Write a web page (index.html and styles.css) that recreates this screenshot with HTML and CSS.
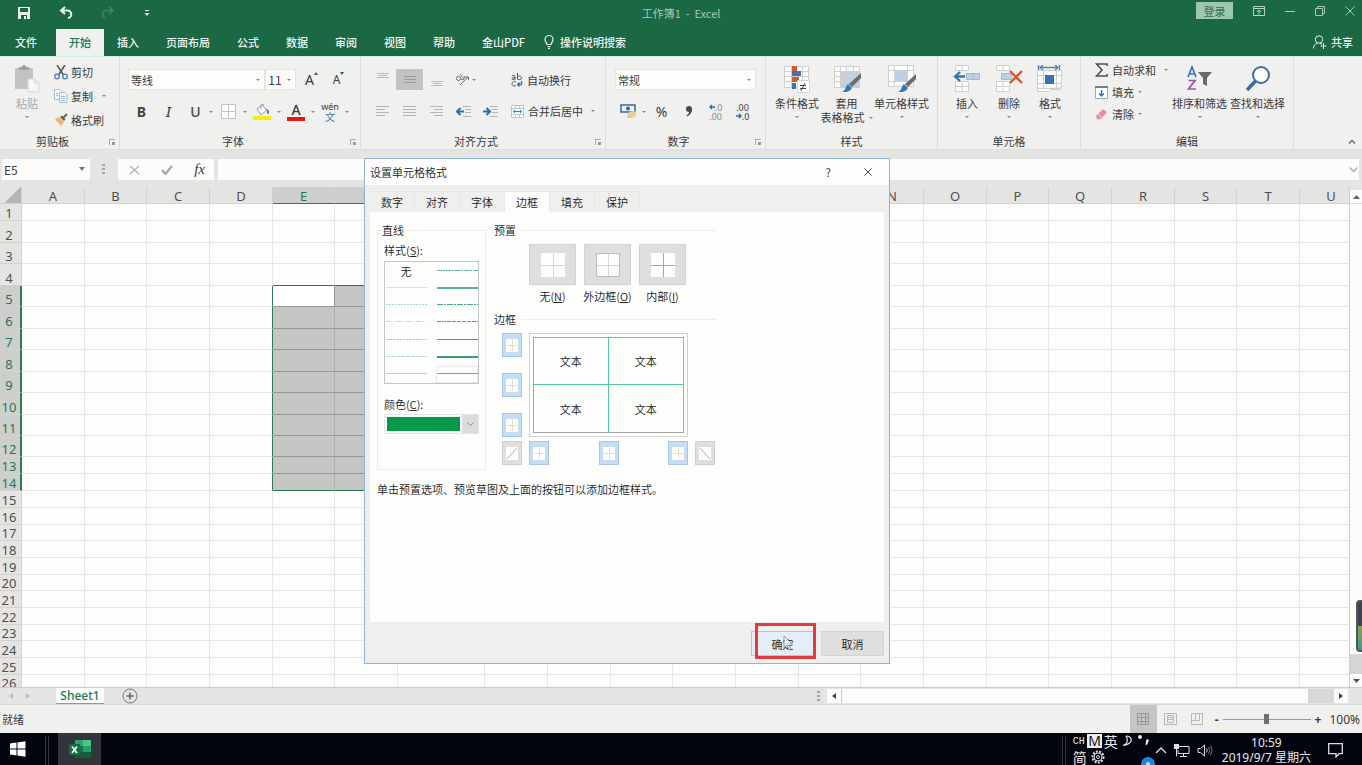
FILE: index.html
```html
<!DOCTYPE html>
<html lang="zh-CN">
<head>
<meta charset="utf-8">
<title>工作簿1 - Excel</title>
<link rel="stylesheet" href="styles.css">
</head>
<body>
<div class="app">
  <header class="titlebar">
    <div class="quick">
      <button class="plain" aria-label="保存"><svg width="14" height="14" viewBox="0 0 14 14"><path d="M1 1h12v12H1z" fill="#eef6f1"/><path d="M3 2h8v4H3zM4 9h6v4H4z" fill="#1a6844"/><path d="M7 10h2v3H7z" fill="#eef6f1"/></svg></button>
      <button class="plain" aria-label="撤消"><svg width="14" height="14" viewBox="0 0 14 14"><path d="M2 4.500h6a3.500 3.500 0 0 1 1 7.500M6 1L2 4.500 6 8" fill="none" stroke="#eef6f1" stroke-width="2"/></svg></button>
      <button class="plain" aria-label="恢复"><svg width="14" height="14" viewBox="0 0 14 14"><path d="M12 4.500H6a3.500 3.500 0 0 0-1 7.500M8 1l4 3.500L8 8" fill="none" stroke="#3f8763" stroke-width="1.500"/></svg></button>
      <button class="plain" aria-label="自定义快速访问工具栏"><svg width="8" height="8" viewBox="0 0 8 8"><path d="M2 1h4v1H2zM1.500 4h5L4 7z" fill="#d8e8df"/></svg></button>
    </div>
    <div class="doc-title">工作簿1&nbsp; -&nbsp; Excel</div>
    <div class="window-tools">
      <button class="login">登录</button>
      <button class="plain" aria-label="功能区显示选项"><svg width="12" height="10" viewBox="0 0 12 10"><path d="M.5.500h11v9H.5zM.5 2.500h11M6 8.500v-4M4 6l2-2 2 2" fill="none" stroke="#b5d3c2"/></svg></button>
      <button class="plain" aria-label="最小化"><svg width="10" height="10" viewBox="0 0 10 10"><path d="M0 5.500h10" stroke="#a5c8b5"/></svg></button>
      <button class="plain" aria-label="还原"><svg width="10" height="10" viewBox="0 0 10 10"><path d="M.5 2.500h7v7h-7zM2.500 2V.5h7v7H8" fill="none" stroke="#a5c8b5"/></svg></button>
      <button class="plain" aria-label="关闭"><svg width="10" height="10" viewBox="0 0 10 10"><path d="M.5.500l9 9M9.500.500l-9 9" stroke="#a5c8b5"/></svg></button>
    </div>
  </header>
  <nav class="tabs">
    <button class="tab file">文件</button>
    <button class="tab current">开始</button>
    <button class="tab">插入</button>
    <button class="tab">页面布局</button>
    <button class="tab">公式</button>
    <button class="tab">数据</button>
    <button class="tab">审阅</button>
    <button class="tab">视图</button>
    <button class="tab">帮助</button>
    <button class="tab">金山PDF</button>
    <button class="tell"><svg width="10" height="14" viewBox="0 0 10 14"><path d="M3 9.500C3 8 1 7 1 4.500a4 4 0 0 1 8 0C9 7 7 8 7 9.500zM3.500 11.500h3M4 13.300h2" fill="none" stroke="#e8f3ed" stroke-width="1.200"/></svg>操作说明搜索</button>
    <button class="share"><svg width="14" height="14" viewBox="0 0 14 14"><circle cx="6" cy="4.500" r="3.700" fill="none" stroke="#e8f3ed"/><path d="M.5 13.500c0-3 1.500-4.500 4-5.200M7 8.300l2 1M7.500 11h6M10.500 8v6" fill="none" stroke="#e8f3ed"/></svg>共享</button>
  </nav>

  <section class="ribbon">
    <div class="group g-clip">
      <div class="body clip-body">
        <button class="big paste"><svg width="26" height="28" viewBox="0 0 26 28"><path d="M1 3h18v21H1z" fill="#c4c3c4"/><path d="M5 5V2h3a2 2 0 0 1 4 0h3v3z" fill="#9f9fa0"/><path d="M14 14h7l4 4v9H14z" fill="#f6f6f8" stroke="#d7d7d9"/><path d="M21 14v4h4" fill="none" stroke="#d0d0d2"/></svg><span>粘贴</span><i class="caret"></i></button>
        <div class="stack s24">
          <button><svg width="14" height="15" viewBox="0 0 14 15"><path d="M3 0l6.500 10M11 0L4.500 10" stroke="#555" stroke-width="1.500"/><circle cx="3" cy="11.500" r="2.300" fill="none" stroke="#4b7db5" stroke-width="1.300"/><circle cx="11" cy="11.500" r="2.300" fill="none" stroke="#4b7db5" stroke-width="1.300"/></svg>剪切</button>
          <button><svg width="14" height="14" viewBox="0 0 14 14"><path d="M.5.500H6l2 2v8H.5z" fill="#f4f7fa" stroke="#a9bccd"/><path d="M5.500 3.500H11l2 2v8H5.500z" fill="#f4f7fa" stroke="#a9bccd"/><path d="M7 7.500h4M7 9.500h4M7 11.500h4M2 4.500h2M2 6.500h2" stroke="#9db9d3"/></svg>复制<i class="caret"></i></button>
          <button><svg width="14" height="14" viewBox="0 0 14 14"><path d="M1 6l4-2 5 5-3 4z" fill="#e9b869"/><path d="M6 4l4 4 1.500-2L8.500 2.500z" fill="#6a5a4c"/><path d="M10 4l3-3" stroke="#6a6462" stroke-width="2"/></svg>格式刷</button>
        </div>
      </div>
      <div class="caption has-launch">剪贴板<i class="launch"></i></div>
    </div>

    <div class="group g-font">
      <div class="body rows">
        <div class="line">
          <label class="pick font-name"><select aria-label="字体"><option>等线</option></select><i class="caret"></i></label>
          <label class="pick font-size"><select aria-label="字号"><option>11</option></select><i class="caret"></i></label>
          <button class="slot grow">A<svg width="4" height="3" viewBox="0 0 4 3"><path d="M0 3l2-3 2 3z" fill="#35577d"/></svg></button>
          <button class="slot shrink">A<svg width="4" height="3" viewBox="0 0 4 3"><path d="M0 0h4L2 3z" fill="#35577d"/></svg></button>
        </div>
        <div class="line font-line">
          <button class="slot letter bold">B</button>
          <button class="slot letter italic">I</button>
          <button class="slot letter under">U</button><i class="caret"></i>
          <button class="wide"><svg width="15" height="15" viewBox="0 0 15 15"><path d="M.5.500h14v14H.5zM7.500 1v13M1 7.500h13" fill="#fff" stroke="#c1c1c1"/></svg></button><i class="caret"></i>
          <button class="wide"><svg width="18" height="18" viewBox="0 0 18 18"><path d="M4 6l5-4 5 5-6 5z" fill="#f7f9fb" stroke="#8aa0b8"/><path d="M8 6V2a2 2 0 0 1 3 0" fill="none" stroke="#8aa0b8"/><path d="M14 6c3 2 2 5 1 5s-1-2-1-5" fill="#3974b8"/><path d="M0 13h18v4H0z" fill="#fbea12"/></svg></button><i class="caret"></i>
          <button class="wide color-a"><span>A</span></button><i class="caret"></i>
          <button class="wide phonetic"><span>wén</span><b>文</b></button><i class="caret"></i>
        </div>
      </div>
      <div class="caption has-launch">字体<i class="launch"></i></div>
    </div>

    <div class="group g-align">
      <div class="body rows align-rows">
        <button class="slot up" aria-label="顶端对齐"><svg width="12" height="6" viewBox="0 0 12 6"><path d="M0 .500h12M2 2.500h8M0 4.500h12" stroke="#b9b9b9"/></svg></button>
        <button class="slot on" aria-label="垂直居中"><svg width="12" height="8" viewBox="0 0 12 8"><path d="M0 .500h12M0 3.500h12M0 6.500h12" stroke="#9c9c9c"/></svg></button>
        <button class="slot down" aria-label="底端对齐"><svg width="12" height="6" viewBox="0 0 12 6"><path d="M0 .500h12M2 2.500h8M0 4.500h12" stroke="#b9b9b9"/></svg></button>
        <button class="slot" aria-label="方向"><svg width="14" height="13" viewBox="0 0 14 13"><path d="M1 4a2 2 0 1 1 3 3 2 2 0 1 1-3-3M4 1l4 5M8 3a2 2 0 1 1-3 3M4 12l8-8M9 4h3.500v3" fill="none" stroke="#6e6e6e"/></svg><i class="caret"></i></button>
        <span></span>
        <button class="act"><svg width="12" height="14" viewBox="0 0 12 14"><path d="M1 3c2-1.500 3 0 3 1v2.500M4 4.500c-4 0-4 2.500-1 2L4 5M6.500 0v6.500M6.500 4c1-2 4-1 4 1s-3 2-4 .5M5 9c-2-1.500-4 0-4 1.700S3 14 5 12.500" fill="none" stroke="#555"/><path d="M10.500 8v3.500H6.500M8.500 9.500l-2 2 2 2" fill="none" stroke="#3a73b3" stroke-width="1.300"/></svg>自动换行</button>
        <button class="slot" aria-label="左对齐"><svg width="13" height="12" viewBox="0 0 13 12"><path d="M0 .500h13M0 3.500h9M0 6.500h13M0 9.500h9" stroke="#b5b5b5"/></svg></button>
        <button class="slot" aria-label="居中"><svg width="13" height="12" viewBox="0 0 13 12"><path d="M0 .500h13M0 3.500h13M0 6.500h13M0 9.500h13" stroke="#b5b5b5"/></svg></button>
        <button class="slot" aria-label="右对齐"><svg width="13" height="12" viewBox="0 0 13 12"><path d="M0 .500h13M4 3.500h9M0 6.500h13M4 9.500h9" stroke="#b5b5b5"/></svg></button>
        <button class="slot" aria-label="减少缩进"><svg width="15" height="12" viewBox="0 0 15 12"><path d="M7 .500h8M9 3.500h6M9 6.500h6M7 10.500h8" stroke="#b5b5b5"/><path d="M8 5.500H1.500M4.500 2L1 5.500 4.500 9" fill="none" stroke="#2f6cb3" stroke-width="2"/></svg></button>
        <button class="slot" aria-label="增加缩进"><svg width="15" height="12" viewBox="0 0 15 12"><path d="M7 .500h8M9 3.500h6M9 6.500h6M7 10.500h8" stroke="#b5b5b5"/><path d="M0 5.500h6.500M3.500 2L7 5.500 3.500 9" fill="none" stroke="#2f6cb3" stroke-width="2"/></svg></button>
        <button class="act"><svg width="13" height="13" viewBox="0 0 13 13"><path d="M.5.500h12v12H.5zM.5 3.500h12M.5 9.500h12M4.500.500v3M8.500.500v3M4.500 9.500v3M8.500 9.500v3" fill="#fbfdff" stroke="#b5c6d6"/><path d="M2.500 6.500h8M4 5L2.500 6.500 4 8M9 5l1.500 1.500L9 8" fill="none" stroke="#4d7fb8"/></svg>合并后居中<i class="caret"></i></button>
      </div>
      <div class="caption has-launch">对齐方式<i class="launch"></i></div>
    </div>

    <div class="group g-num">
      <div class="body rows">
        <label class="pick format"><select aria-label="数字格式"><option>常规</option></select><i class="caret"></i></label>
        <div class="line num-line">
          <button class="slot" aria-label="会计数字格式"><svg width="17" height="15" viewBox="0 0 17 15"><path d="M1 1h14v7H1z" fill="#eaf1f8" stroke="#35679f" stroke-width="1.500"/><circle cx="8" cy="4.500" r="2" fill="#35679f"/><path d="M8 9c2-2 6-3 8-1v4l-4 2H7z" fill="#ecc98c"/></svg></button><i class="caret"></i>
          <button class="slot pct">%</button>
          <button class="slot" aria-label="千位分隔样式"><svg width="8" height="11" viewBox="0 0 8 11"><circle cx="4" cy="3" r="3" fill="#4a4a4a"/><path d="M7 3c0 4-2 6-5 7.500L1.500 9.500C4 8 4.500 6 4 4z" fill="#4a4a4a"/></svg></button>
          <button class="slot dec"><span><svg width="6" height="6" viewBox="0 0 6 6"><path d="M6 3H1M3 1L1 3l2 2" fill="none" stroke="#2f6cb3" stroke-width="1.500"/></svg>.0</span><span>.00</span></button>
          <button class="slot dec dark"><span>.00</span><span><svg width="6" height="6" viewBox="0 0 6 6"><path d="M0 3h5M3 1l2 2-2 2" fill="none" stroke="#2f6cb3" stroke-width="1.500"/></svg>.0</span></button>
        </div>
      </div>
      <div class="caption has-launch">数字<i class="launch"></i></div>
    </div>

    <div class="group g-style">
      <div class="body bigs">
        <button class="big"><svg width="28" height="28" viewBox="0 0 28 28"><path d="M1.500 1.500h24v21h-24zM1.500 6.500h24M1.500 11.500h24M1.500 16.500h24M8.500 1.500v21M19.500 1.500v21" fill="#fdfdfd" stroke="#cfcfcf"/><path d="M9 1h5v5H9zM9 12h7v5H9z" fill="#d9572f"/><path d="M9 6h9v5H9zM9 18h4v6H9z" fill="#3d74b4"/><path d="M14.500 15.500h12v12h-12z" fill="#fff" stroke="#d5d5d5"/><path d="M17 20.500h6M17 23.500h6M22 18l-4 8" stroke="#444"/></svg><span>条件格式</span><i class="caret"></i></button>
        <button class="big"><svg width="28" height="28" viewBox="0 0 28 28"><path d="M1.500 1.500h25v21h-25z" fill="#fdfdfd" stroke="#cfcfcf"/><path d="M8 7h19v16H8z" fill="#bdd0e6"/><path d="M1.500 6.500h25M1.500 11.500h25M1.500 16.500h25M7.500 1.500v21M13.500 1.500v21M20.500 1.500v21" fill="none" stroke="#cfcfcf"/><path d="M28 8v5l-9 9-3-3z" fill="#6c6c6c"/><path d="M15 19l4 4c-3 5-8 4-10 4 4-2 3-5 6-8" fill="#3976b8"/></svg><span>套用<br>表格格式<i class="caret"></i></span></button>
        <button class="big"><svg width="28" height="28" viewBox="0 0 28 28"><path d="M.5.500h25v21H.5zM.5 5.500h25M.5 16.500h25M6.500.500v21M19.500.500v21" fill="#fdfdfd" stroke="#cfcfcf"/><path d="M7 6h12v10H7z" fill="#bdd0e6"/><path d="M28 9v5l-8 8-3-3z" fill="#6c6c6c"/><path d="M16 19l4 4c-3 5-8 4-10 4 4-2 3-5 6-8" fill="#3976b8"/></svg><span>单元格样式</span><i class="caret"></i></button>
      </div>
      <div class="caption">样式</div>
    </div>

    <div class="group g-cell">
      <div class="body bigs">
        <button class="big"><svg width="28" height="28" viewBox="0 0 28 28"><path d="M2.500.500h13v5h-13zM9 .500v5M2.500 16.500h13v10h-13zM9 16.500v10M2.500 21.500h13" fill="#fdfdfd" stroke="#cfcfcf"/><path d="M13.500 8.500h13v6h-13zM20 8.500v6" fill="#bccfe3" stroke="#a9bac9"/><path d="M12 11.500H3M7 7l-5 4.500L7 16" fill="none" stroke="#3473b5" stroke-width="2.300"/></svg><span>插入</span><i class="caret"></i></button>
        <button class="big"><svg width="28" height="28" viewBox="0 0 28 28"><path d="M1.500.500h13v5h-13zM8 .500v5M1.500 16.500h13v10h-13zM8 16.500v10M1.500 21.500h13" fill="#fdfdfd" stroke="#cfcfcf"/><path d="M6.500 8.500h10v6h-10z" fill="#bccfe3" stroke="#a9bac9"/><path d="M15 6l12 12M27 6L15 18" stroke="#d9552f" stroke-width="2.300"/></svg><span>删除</span><i class="caret"></i></button>
        <button class="big"><svg width="26" height="28" viewBox="0 0 26 28"><path d="M.5 5.500h24v18H.5zM6.500 5.500v18M19.500 5.500v18M.5 10.500h24M.5 18.500h24M.5 23.500v3h11l2-2h9l2-3" fill="#fdfdfd" stroke="#cfcfcf"/><path d="M8 10h9v9H8z" fill="#3473b5"/><path d="M3 2.500h18M6 0L3 2.500 6 5M18 0l3 2.500L18 5M1.500 0v5M22.500 0v5" fill="none" stroke="#4d82bd" stroke-width="1.300"/></svg><span>格式</span><i class="caret"></i></button>
      </div>
      <div class="caption">单元格</div>
    </div>

    <div class="group g-edit">
      <div class="body edit-body">
        <div class="stack s22">
          <button><svg width="13" height="14" viewBox="0 0 13 14"><path d="M12 3V1H1.500l5.500 6-5.500 6H12v-2" fill="none" stroke="#505050" stroke-width="1.600"/></svg>自动求和<i class="caret"></i></button>
          <button><svg width="13" height="13" viewBox="0 0 13 13"><path d="M.5.500h12v12H.5z" fill="#fff" stroke="#9bacbb"/><path d="M0 0h13v2H0z" fill="#707f8c"/><path d="M6.500 4v6M4 7.500L6.500 10 9 7.500" fill="none" stroke="#3473b5" stroke-width="1.500"/></svg>填充<i class="caret"></i></button>
          <button><svg width="13" height="12" viewBox="0 0 13 12"><path d="M1 8l7-7 4 3-6 7-4 .5z" fill="#e88d99"/><path d="M3 6l4 4" stroke="#f7d9dd"/></svg>清除<i class="caret"></i></button>
        </div>
        <button class="big"><svg width="28" height="28" viewBox="0 0 28 28"><path d="M2 12L6 2l4 10M3.500 9h5" fill="none" stroke="#3a76b9" stroke-width="1.700"/><path d="M2.500 15.500H9L2.500 24H10" fill="none" stroke="#9a57ad" stroke-width="1.700"/><path d="M12 7h14l-5 6v8l-4-2v-6z" fill="#6b6b6b"/></svg><span>排序和筛选</span><i class="caret"></i></button>
        <button class="big"><svg width="28" height="28" viewBox="0 0 28 28"><circle cx="17" cy="10" r="8" fill="#fbfdff" stroke="#3b6d9f" stroke-width="2"/><path d="M11.500 16L3 25" stroke="#3b6d9f" stroke-width="3.500"/></svg><span>查找和选择</span><i class="caret"></i></button>
      </div>
      <div class="caption">编辑</div>
    </div>
    <button class="plain collapse" aria-label="折叠功能区"><svg width="8" height="6" viewBox="0 0 8 6"><path d="M1 4.500l3-3 3 3" fill="none" stroke="#666" stroke-width="1.300"/></svg></button>
  </section>

  <section class="formula">
    <div class="namebox"><input value="E5" aria-label="名称框"><svg width="7" height="5" viewBox="0 0 7 5"><path d="M0 0h6L3 4z" fill="#777"/></svg></div>
    <div class="grip"></div>
    <div class="fx-tools">
      <button class="plain" aria-label="取消输入"><svg width="11" height="10" viewBox="0 0 11 10"><path d="M1 1l9 8M10 1L1 9" stroke="#b3b3b3" stroke-width="1.300"/></svg></button>
      <button class="plain" aria-label="输入"><svg width="12" height="10" viewBox="0 0 12 10"><path d="M1 5l3.500 4L11 1" fill="none" stroke="#a2a2a2" stroke-width="2"/></svg></button>
      <button class="plain fx">fx</button>
    </div>
    <div class="fx-input"><input aria-label="编辑栏"><svg width="9" height="6" viewBox="0 0 9 6"><path d="M.5.500l4 4 4-4" fill="none" stroke="#aaa" stroke-width="1.300"/></svg></div>
  </section>

  <main class="sheet">
    <div class="cells"><table class="grid" id="grid"></table></div>
    <div class="vscroll">
      <button aria-label="向上滚动"><svg width="7" height="4" viewBox="0 0 7 4"><path d="M0 4h7L3.500 0z" fill="#666"/></svg></button>
      <div class="vtrack"></div>
      <div class="vthumb"></div>
      <button aria-label="向下滚动"><svg width="7" height="4" viewBox="0 0 7 4"><path d="M0 0h7L3.500 4z" fill="#555"/></svg></button>
    </div>
  </main>

  <div class="sheetbar">
    <div class="nav-arrows"><svg width="5" height="6" viewBox="0 0 5 6"><path d="M4 0v6L0 3z" fill="#bdbdbd"/></svg><svg width="5" height="6" viewBox="0 0 5 6"><path d="M0 0v6l4-3z" fill="#bdbdbd"/></svg></div>
    <button class="sheet-tab">Sheet1</button>
    <button class="plain" aria-label="新工作表"><svg width="16" height="16" viewBox="0 0 16 16"><circle cx="8" cy="8" r="7" fill="none" stroke="#777"/><path d="M4.500 8h7M8 4.500v7" stroke="#666" stroke-width="1.500"/></svg></button>
    <div class="hscroll">
      <div class="grip"></div>
      <button aria-label="向左滚动"><svg width="4" height="6" viewBox="0 0 4 6"><path d="M4 0v6L0 3z" fill="#444"/></svg></button>
      <div class="htrack"></div>
      <div class="hthumb"></div>
      <button aria-label="向右滚动"><svg width="4" height="6" viewBox="0 0 4 6"><path d="M0 0v6l4-3z" fill="#444"/></svg></button>
    </div>
  </div>

  <footer class="status">
    <span class="ready">就绪</span>
    <div class="views">
      <button class="on" aria-label="普通"><svg width="12" height="12" viewBox="0 0 12 12"><path d="M.5.500h11v11H.5zM4.500 0v12M8.500 0v12M0 4.500h12M0 8.500h12" fill="none" stroke="#999"/></svg></button>
      <button aria-label="页面布局"><svg width="13" height="12" viewBox="0 0 13 12"><path d="M.5.500h12v11H.5zM3.500 2.500h6v7h-6zM4 4.500h5M4 6.500h5" fill="none" stroke="#b8b8b8"/></svg></button>
      <button aria-label="分页预览"><svg width="12" height="12" viewBox="0 0 12 12"><path d="M.5.500h11v11H.5zM4.500.500v7M8.500.500v7M.5 7.500h8" fill="none" stroke="#b8b8b8"/></svg></button>
    </div>
    <div class="zoom"><b>-</b><input type="range" min="10" max="190" value="100" aria-label="缩放"><b>+</b><span>100%</span></div>
  </footer>

  <footer class="taskbar">
    <button class="start" aria-label="开始菜单"><svg width="16" height="16" viewBox="0 0 16 16"><path d="M0 2.500L6.500 1.500V7.500H0zM7.500 1.400L15.500.2V7.500h-8zM0 8.500h6.500v6L0 13.500zM7.500 8.500h8v7.200l-8-1.100z" fill="#fff"/></svg></button>
    <div class="bars"></div>
    <button class="excel" aria-label="Excel"><svg width="22" height="20" viewBox="0 0 22 20"><path d="M6 1h8v6H6z" fill="#2fa36a"/><path d="M14 1h8v6h-8z" fill="#47c78b"/><path d="M6 7h8v6H6z" fill="#137443"/><path d="M14 7h8v6h-8z" fill="#26a265"/><path d="M6 13h16v6H6z" fill="#165c38"/><path d="M0 5h11v11H0z" fill="#117040"/><path d="M3 7.500l5 6.500M8 7.500L3 14" stroke="#fff" stroke-width="1.700"/></svg></button>
    <div class="tray">
      <div class="bars"></div>
      <div class="ime">
        <div><small>CH</small><b>M</b><span>英</span><svg width="12" height="12" viewBox="0 0 12 12"><path d="M4 1c7 0 8 8-3 9.500 4-1.500 6-5 3-9.500" fill="none" stroke="#e8e8ea" stroke-width="1.200"/></svg><svg width="12" height="12" viewBox="0 0 12 12"><circle cx="2" cy="2" r="2" fill="#eee"/><path d="M8.500 4l2.500 1-2 5-1.500-.5z" fill="#eee"/></svg></div>
        <div><span>简</span><svg width="14" height="14" viewBox="0 0 14 14"><circle cx="7" cy="7" r="5.500" fill="none" stroke="#ddd" stroke-width="2" stroke-dasharray="2 1.300"/><circle cx="7" cy="7" r="4" fill="none" stroke="#ddd"/><circle cx="7" cy="7" r="1.500" fill="none" stroke="#ddd"/></svg><svg class="dot" width="14" height="8" viewBox="0 0 14 8"><circle cx="7" cy="7" r="7" fill="#1b86dc"/><circle cx="7" cy="7" r="2" fill="#bcdcf5"/></svg></div>
      </div>
      <div class="tray-icons">
        <svg width="12" height="7" viewBox="0 0 12 7"><path d="M1 6l5-5 5 5" fill="none" stroke="#ddd" stroke-width="1.300"/></svg>
        <svg width="16" height="13" viewBox="0 0 16 13"><path d="M5 2.500h10v7H4V6M9.500 9.500v3M6 12.500h7M2.500 5v7.500" fill="none" stroke="#ddd"/><path d="M0 0h5v5H0z" fill="#ddd"/></svg>
        <svg width="16" height="13" viewBox="0 0 16 13"><path d="M1 4.500h2.500l4-3.500v11l-4-3.500H1z" fill="none" stroke="#ddd"/><path d="M9.500 4.500q1.500 2 0 4" fill="none" stroke="#ddd"/><path d="M11.500 3q2.500 3.500 0 7M13.500 1.500q3 5 0 10" fill="none" stroke="#777"/></svg>
      </div>
      <div class="clock"><span>10:59</span><span>2019/9/7 星期六</span></div>
      <svg class="note" width="15" height="15" viewBox="0 0 15 15"><path d="M.7.700h13.600v10H11L8 14v-3.300H.7z" fill="none" stroke="#ddd" stroke-width="1.300"/></svg>
    </div>
  </footer>
</div>

<div class="side-widget"></div>

<div class="dialog" role="dialog" aria-label="设置单元格格式">
  <div class="dlg-title"><span>设置单元格格式</span><button class="plain">?</button><button class="plain" aria-label="关闭"><svg width="8" height="8" viewBox="0 0 8 8"><path d="M.5.500l7 7M7.500.500l-7 7" stroke="#444"/></svg></button></div>
  <div class="dlg-main">
    <div class="dlg-tabs">
      <button>数字</button><button>对齐</button><button>字体</button><button class="current">边框</button><button>填充</button><button>保护</button>
    </div>
    <div class="dlg-page">
      <div class="cols">
        <fieldset class="lines">
          <legend>直线</legend>
          <span class="lbl">样式(<u>S</u>):</span>
          <div class="styles" id="styles"></div>
          <label class="lbl color-lbl" for="color">颜色(<u>C</u>):</label>
          <div class="color"><select id="color"><option></option></select><i class="swatch"></i><i class="drop"><svg width="7" height="5" viewBox="0 0 7 5"><path d="M.5.500l3 3 3-3" fill="none" stroke="#888"/></svg></i></div>
        </fieldset>
        <div class="right">
          <div class="sec"><span>预置</span><i></i></div>
          <div class="presets">
            <button><i><svg width="24" height="24" viewBox="0 0 24 24"><path d="M0 0h24v24H0z" fill="#fdfdfd"/><path d="M12.500 0v24M0 12.500h24" stroke="#d5d5d5"/></svg></i><span>无(<u>N</u>)</span></button>
            <button><i><svg width="24" height="24" viewBox="0 0 24 24"><path d="M.5.500h23v23H.5z" fill="#fdfdfd" stroke="#bcbcbc"/><path d="M12.500 1v22M1 12.500h22" stroke="#d5d5d5"/></svg></i><span>外边框(<u>O</u>)</span></button>
            <button><i><svg width="24" height="24" viewBox="0 0 24 24"><path d="M0 0h24v24H0z" fill="#fdfdfd"/><path d="M12.500 0v24M0 12.500h24" stroke="#a8a8a8"/></svg></i><span>内部(<u>I</u>)</span></button>
          </div>
          <div class="sec sec2"><span>边框</span><i></i></div>
          <div class="edges">
            <div class="vbtns" id="vbtns"></div>
            <div class="preview"><div class="pcell">文本</div><div class="pcell">文本</div><div class="pcell">文本</div><div class="pcell">文本</div></div>
            <span></span>
            <button class="edge off" aria-label="斜线"><svg width="12" height="13" viewBox="0 0 12 13"><path d="M0 0h12v13H0z" fill="#fff"/><path d="M1 12L11 1" stroke="#aaa"/></svg></button>
            <div class="hbtns" id="hbtns"></div>
            <button class="edge off" aria-label="反斜线"><svg width="12" height="13" viewBox="0 0 12 13"><path d="M0 0h12v13H0z" fill="#fff"/><path d="M1 1l10 11" stroke="#aaa"/></svg></button>
          </div>
        </div>
      </div>
      <p class="hint">单击预置选项、预览草图及上面的按钮可以添加边框样式。</p>
    </div>
    <div class="dlg-foot">
      <button class="ok">确定</button><button>取消</button>
      <div class="mark"></div>
      <svg class="pointer" width="12" height="17" viewBox="0 0 12 17"><path d="M1 1v12l3-3 2 5 2-1-2-4h4z" fill="#fff" stroke="#888"/></svg>
    </div>
  </div>
</div>
<script src="app.js"></script>
</body>
</html>
```

FILE: app.js
```js
const widths = [63, 62, 63, 63, 62, 63, 87, 63, 63, 62, 63, 63, 62, 63, 63, 62, 63, 63, 62, 63, 63];
const heights = [17, 22, 21, 22, 21, 22, 21, 22, 21, 22, 21, 21, 17, 17, 17, 17, 16, 17, 17, 16, 17, 17, 16, 17, 17, 16];
const inCols = c => c >= 4 && c <= 9;
const inRows = r => r >= 4 && r <= 13;

let html = '<colgroup><col style="width:22px">' + widths.map(w => `<col style="width:${w}px">`).join('') + '</colgroup>';
html += '<tr class="head"><th class="corner"></th>' +
  widths.map((w, c) => `<th class="${inCols(c) ? 'sel' : ''}">${String.fromCharCode(65 + c)}</th>`).join('') + '</tr>';
heights.forEach((h, r) => {
  html += `<tr style="height:${h}px"><th class="${inRows(r) ? 'sel' : ''}">${r + 1}</th>`;
  widths.forEach((w, c) => {
    const cls = [];
    if (inRows(r) && inCols(c)) cls.push(r === 4 && c === 4 ? 'active' : 'sel');
    if (inCols(c) && r === 3) cls.push('edge-b');
    if (inCols(c) && r === 13) cls.push('edge-b');
    if (inRows(r) && (c === 3 || c === 9)) cls.push('edge-r');
    html += `<td class="${cls.join(' ')}"></td>`;
  });
  html += '</tr>';
});
document.getElementById('grid').innerHTML = html;

const edgeIcon = '<svg width="12" height="13" viewBox="0 0 12 13"><path d="M0 0h12v13H0z" fill="#fff"/><path d="M6.500 1v11M1 6.500h10" stroke="#ecd9c2"/></svg>';
const edge = n => `<button class="edge" aria-label="${n}">${edgeIcon}</button>`;
document.getElementById('vbtns').innerHTML = ['上边框', '水平中线', '下边框'].map(edge).join('');
document.getElementById('hbtns').innerHTML = ['左边框', '垂直中线', '右边框'].map(edge).join('');

const strokes = [
  null, ['#63b794', 1, '5 1 2 1'],
  ['#c5ecda', 1, ''], ['#5bb38d', 2, ''],
  ['#a5d7c0', 1, '2 1'], ['#4aa880', 1, '6 1 2 1'],
  ['#b5dfcc', 1, '5 2 1 2'], ['#4aa880', 1, '4 1'],
  ['#a5d7c0', 1, '6 1 2 1'], ['#2fae78', 1, ''],
  ['#b0dcc8', 1, '4 1'], ['#3a9d72', 2, ''],
  ['#9fe0c1', 1, ''], ['#45be8b', 1, '']
];
document.getElementById('styles').innerHTML = strokes.map((s, i) => s
  ? `<button class="${i === 13 ? 'picked' : ''}" aria-label="线条样式 ${i}"><svg width="41" height="2" viewBox="0 0 41 2"><path d="M0 ${s[1] === 2 ? 1 : 0.5}h41" stroke="${s[0]}" stroke-width="${s[1]}" stroke-dasharray="${s[2] || 'none'}"/></svg></button>`
  : '<button>无</button>').join('');
```

FILE: styles.css
```css
* { box-sizing: border-box; }
body { margin: 0; font: 11px/14px "Noto Sans CJK SC", "Noto Sans", sans-serif; color: #3a3a3a; overflow: hidden; }
button { border: 0; padding: 0; margin: 0; background: none; font: inherit; color: inherit; display: flex; align-items: center; justify-content: center; }
input, select { font: inherit; color: inherit; border: 0; padding: 0; margin: 0; background: none; appearance: none; min-width: 0; outline: 0; }
svg { display: block; flex: none; }
i { font-style: normal; }
u { text-underline-offset: 1px; }
.app { height: 100vh; display: flex; flex-direction: column; background: #e4e4e2; }

.titlebar { height: 25px; flex: none; background: #1a6844; display: grid; grid-template-columns: 1fr auto 1fr; align-items: center; }
.quick { display: flex; align-items: center; gap: 28px; padding-left: 17px; }
.doc-title { color: #a9cbb8; }
.window-tools { display: flex; justify-content: flex-end; align-items: center; gap: 20px; padding: 0 7px 4px 0; }
.login { background: #9fc6b0; color: #2e6e4e; width: 37px; height: 17px; }
.tabs { height: 31px; flex: none; background: #1a6844; display: flex; color: #f0f7f3; padding: 4px 9px 0 2px; font-weight: 500; }
.tab, .tell, .share { padding: 0 13px 2px; }
.file { margin-right: 6px; }
.tab:nth-child(n+4) { margin-left: 1px; }
.tab.current { background: #f0f0ee; color: #1f7a50; }
.tell { gap: 6px; padding-left: 6px; }
.share { margin-left: auto; gap: 4px; padding-right: 0; }

.ribbon { height: 94px; flex: none; background: #f0f0ee; display: flex; border-top: 1px solid #d3ecdf; border-bottom: 1px solid #dededc; }
.group { display: flex; flex-direction: column; border-right: 1px solid #dcdcda; flex: none; }
.g-clip { width: 120px; }
.g-font { width: 241px; }
.g-align { width: 245px; }
.g-num { width: 160px; }
.g-style { width: 172px; }
.g-cell { width: 143px; }
.g-edit { width: 213px; }
.body { flex: 1; display: flex; }
.caption { height: 16px; text-align: center; line-height: 16px; }
.has-launch { display: grid; grid-template-columns: 1fr 14px; }
.launch { width: 6px; height: 6px; border-left: 1px solid #aaa; border-top: 1px solid #aaa; margin: 6px 0 0 4px; background: linear-gradient(#999, #999) 100% 100% / 3px 3px no-repeat; }
.caret { flex: none; width: 0; height: 0; border: 2px solid transparent; border-top-color: #888; border-bottom: 0; }
.clip-body { padding: 3px 0 0 4px; }
.big { flex-direction: column; justify-content: flex-start; white-space: nowrap; line-height: 14px; }
.big svg { margin-bottom: 3px; }
.big > .caret { margin-top: 6px; }
.big span .caret { display: inline-block; margin: 0 0 3px 4px; }
.paste { width: 46px; color: #aaa; padding-top: 5px; }
.stack { display: flex; flex-direction: column; align-items: flex-start; }
.stack button { gap: 3px; }
.s24 { padding-left: 4px; }
.s24 button { height: 24px; }
.s24 .caret { margin-left: 6px; }
.s22 { width: 87px; padding-top: 2px; }
.s22 button { height: 22px; gap: 4px; }
.s22 button:first-child .caret { margin-left: 4px; }
.rows { flex-direction: column; row-gap: 11px; padding: 12px 8px 0; }
.line { display: flex; height: 21px; align-items: center; }
.pick { display: grid; grid-template-columns: 1fr 8px; align-items: center; background: #fdfdfc; height: 21px; border: 1px solid #e3e3e1; }
.pick select { grid-area: 1 / 1 / 2 / 3; width: 100%; padding-left: 2px; }
.pick .caret { grid-area: 1 / 2; }
.font-name { width: 139px; }
.font-size { width: 31px; margin-right: 2px; font-size: 12px; }
.slot { width: 27px; height: 21px; flex: none; }
.grow, .shrink { font-family: "Noto Sans", sans-serif; font-size: 14px; }
.grow svg, .shrink svg { align-self: flex-start; margin-top: 3px; }
.shrink { font-size: 12px; }
.letter { font: 14px "Noto Sans", sans-serif; color: #444; }
.bold { font-weight: 700; }
.italic { font-style: italic; font-weight: 500; }
.under { font-weight: 500; }
.wide { width: 30px; height: 20px; flex: none; }
.color-a span { font: 500 14px/14px "Noto Sans", sans-serif; width: 18px; border-bottom: 4px solid #e01b14; }
.phonetic { flex-direction: column; font: 9px/9px "Noto Sans", sans-serif; }
.phonetic b { font: 10px/11px "Noto Sans CJK SC", sans-serif; color: #4176ad; }

.align-rows { display: grid; grid-template-columns: repeat(5, 27px) 1fr; grid-template-rows: 21px 20px; }
.slot.on { background: #c3c3c1; }
.up { align-items: flex-start; padding-top: 4px; }
.down { align-items: flex-end; padding-bottom: 3px; }
.slot .caret { margin: 0 -4px 0 2px; }
.act { justify-content: flex-start; gap: 4px; padding-left: 7px; white-space: nowrap; }
.act .caret { margin-left: 4px; }
.g-num .body { padding: 12px 9px 0; }
.num-line .caret { margin-right: 2px; }
.pct { font: 14px "Noto Sans", sans-serif; }
.dec { flex-direction: column; font: 9px/9px "Noto Sans", sans-serif; color: #888; }
.dec span { display: flex; align-items: center; }
.dec.dark { color: #444; }
.bigs { padding: 8px 9px 0; justify-content: space-between; }
.g-style .bigs { padding-right: 8px; }
.g-cell .bigs { padding: 8px 17px 0 15px; }
.edit-body { padding: 0 8px 0 14px; }
.s22 + .big { margin-right: 3px; margin-left: -8px; }
.edit-body .big { padding-top: 8px; }
.collapse { margin: auto 6px 4px auto; }

.formula { height: 37px; flex: none; display: flex; padding: 9px 3px 7px 2px; }
.namebox { width: 88px; background: #fcfcfb; display: flex; align-items: center; padding: 0 4px 0 2px; font-size: 12px; }
.namebox input { flex: 1; }
.grip { width: 3px; height: 11px; background: repeating-linear-gradient(#a5a5a5 0 2px, transparent 2px 4px); align-self: center; }
.formula .grip { margin: 0 13px 0 12px; }
.fx-tools { width: 96px; background: #fcfcfb; display: flex; justify-content: space-between; align-items: center; padding: 0 9px 0 11px; margin-right: 4px; }
.fx { font: italic 15px "Liberation Serif", serif; }
.fx-input { flex: 1; background: #fcfcfb; display: flex; align-items: center; }
.fx-input input { flex: 1; height: 100%; }
.fx-input svg { margin-right: 1px; }

.sheet { flex: 1; min-height: 0; display: flex; }
.cells { flex: 1; min-width: 0; overflow: hidden; background: #fdfdfc; border-right: 1px solid #cfcfcd; }
.grid { table-layout: fixed; width: 1328px; border-spacing: 0; font: 13px/14px "Noto Sans", "Noto Sans CJK SC", sans-serif; color: #505050; }
.grid th { font-weight: 400; padding: 0; background: #e4e4e2; border-right: 1px solid #d2d2d0; border-bottom: 1px solid #d2d2d0; vertical-align: bottom; text-align: center; }
.grid th:first-child { padding-right: 3px; }
.grid .head { height: 17px; }
.grid .corner { background: linear-gradient(135deg, #e4e4e2 55%, #b5b5b3 55%); }
.grid th.sel { background: #cdcfcc; color: #2f7253; }
.grid .head .sel { border-bottom-color: #2b7a55; }
.grid tr:not(.head) th.sel { border-right: 2px solid #2b7a55; padding-right: 2px; }
.grid td { padding: 0; border-right: 1px solid #e6e6e5; border-bottom: 1px solid #e6e6e5; }
.grid td.sel { background: #c5c5c3; border-color: #a0a0a0 #b0b0ae #979795; }
.grid td.active { background: #fff; border-color: #979795; }
.grid td.edge-b { border-bottom-color: #2b7a55; }
.grid td.edge-r { border-right-color: #2b7a55; }
.vscroll { width: 12px; display: flex; flex-direction: column; padding-top: 3px; }
.vscroll button { height: 13px; background: #fcfcfb; }
.vtrack { flex: 1; background: #fcfcfb; border-top: 1px solid #ddd; }
.vthumb { height: 20px; background: #d5d5d3; }

.sheetbar { height: 18px; flex: none; display: flex; align-items: center; border-top: 1px solid #cacac8; border-bottom: 1px solid #d9d9d7; }
.nav-arrows { display: flex; gap: 12px; width: 56px; padding-left: 9px; }
.sheet-tab { align-self: stretch; width: 48px; background: #fdfdfc; color: #217a50; font: 500 12px/14px "Noto Sans", sans-serif; border-bottom: 1px solid #7ca893; margin-right: 18px; }
.hscroll { margin-left: auto; width: 40%; display: flex; align-self: stretch; padding: 1px 14px 1px 0; }
.hscroll .grip { margin-right: 7px; }
.hscroll button { width: 14px; background: #fcfcfb; }
.htrack { flex: 1; background: #fcfcfb; border-left: 1px solid #ccc; }
.hthumb { width: 26px; background: #d8d8d6; }

.status { height: 28px; flex: none; background: #f0f0ee; display: flex; align-items: center; padding: 0 2px; }
.views { margin-left: auto; display: flex; align-self: stretch; }
.views button { width: 27px; }
.views .on { background: #c5c5c3; }
.zoom { display: flex; align-items: center; gap: 4px; padding-left: 4px; font: 12px "Noto Sans", sans-serif; }
.zoom input { width: 88px; height: 12px; background: linear-gradient(#999, #999) center / 100% 1px no-repeat; }
.zoom input::-webkit-slider-thumb { appearance: none; width: 5px; height: 10px; background: #6e6e6e; }
.zoom span { margin-left: 4px; }

.taskbar { height: 32px; flex: none; background: #02040f; color: #e9e9eb; display: flex; align-items: stretch; overflow: hidden; }
.start { width: 36px; }
.bars { width: 4px; margin: 3px 0 0; border: 1px solid #34353c; border-width: 0 1px; }
.taskbar > .bars { margin-left: 9px; }
.excel { width: 43px; margin-left: 9px; background: #33353d; }
.tray { margin-left: auto; display: flex; align-items: center; }
.tray .bars { align-self: stretch; margin-right: 7px; }
.ime { width: 77px; align-self: flex-start; font-size: 14px; line-height: 16px; }
.ime div { display: flex; align-items: center; gap: 2px; height: 16px; }
.ime svg { margin-left: 2px; }
.ime .dot { margin: 8px 0 0 34px; }
.ime small { font: 10px "Liberation Mono", monospace; width: 13px; }
.ime b { background: #eee; color: #111; font: 14px/14px "Noto Sans", sans-serif; width: 15px; text-align: center; }
.tray-icons { display: flex; align-items: center; gap: 7px; padding: 3px 9px 0 5px; }
.clock { display: flex; flex-direction: column; align-items: center; align-self: flex-start; font: 12px/15px "Noto Sans", "Noto Sans CJK SC", sans-serif; padding-top: 2px; }
.note { margin: 3px 19px 0 17px; }

.side-widget { position: absolute; right: 0; top: 600px; width: 6px; height: 52px; border: 2px solid #50555f; border-right: 0; border-radius: 4px 0 0 4px; background: linear-gradient(#3e4350 50%, #8fa050 50%, #3a9a90); }

.dialog { position: absolute; left: 50%; top: 158px; width: 526px; margin-left: -317px; border: 1px solid #8fb4d8; background: #efefed; color: #222; font-weight: 350; }
.dlg-title { height: 26px; background: #fdfdfd; display: flex; align-items: center; padding: 0 17px 0 5px; gap: 33px; }
.dlg-title span { flex: 1; }
.dlg-main { padding: 6px 5px 0; }
.dlg-tabs { display: flex; height: 21px; }
.dlg-tabs button { width: 45px; border: 1px solid #e8e8e6; border-left: 0; border-bottom: 0; }
.dlg-tabs .current { background: #fdfdfc; }
.dlg-page { background: #fdfdfc; height: 410px; padding: 10px 7px 0; }
.cols { display: flex; gap: 8px; }
.lines { width: 109px; min-width: 0; flex: none; height: 248px; margin: 0; padding: 0 6px; border: 1px solid #ececea; }
.lines legend { padding: 0 3px 0 0; margin-left: -2px; line-height: 16px; }
.lbl { display: block; line-height: 16px; margin: 4px 0 3px; }
.styles { display: grid; grid-template-columns: 1fr 1fr; grid-template-rows: repeat(7, 1fr); height: 123px; border: 1px solid #c2c8c5; column-gap: 9px; }
.styles .picked { box-shadow: inset 0 0 0 1px #e8e8e8; }
.color-lbl { margin: 12px 0 2px; }
.color { display: grid; grid-template-columns: 1fr 16px; height: 20px; border: 1px solid #e5e5e5; }
.color select { grid-area: 1 / 1 / 2 / 3; }
.swatch { grid-area: 1 / 1; background: #059a4a; margin: 2px; pointer-events: none; }
.drop { grid-area: 1 / 2; background: #dcdcda; display: flex; align-items: center; justify-content: center; pointer-events: none; }
.right { width: 222px; }
.sec { display: flex; align-items: center; gap: 5px; line-height: 16px; }
.sec i { flex: 1; border-top: 1px solid #ececea; }
.presets { display: flex; gap: 8px; padding: 6px 0 0 35px; }
.presets button { flex-direction: column; gap: 4px; width: 47px; white-space: nowrap; }
.presets i { width: 47px; height: 41px; background: #dededc; border: 1px solid #d2d2d0; display: flex; align-items: center; justify-content: center; }
.sec2 { margin: 8px 0 6px; }
.edges { display: grid; grid-template-columns: 20px 159px 20px; column-gap: 7px; row-gap: 4px; padding-left: 8px; }
.vbtns { display: flex; flex-direction: column; justify-content: space-between; height: 104px; }
.hbtns { display: flex; justify-content: space-between; }
.edge { width: 20px; height: 24px; background: #c5dcf5; border: 1px solid #a6c7ea; }
.edge.off { background: #dededc; border-color: #cfcfcd; }
.preview { border: 1px solid #d0d0ce; padding: 3px; display: grid; grid-template-columns: 1fr 1fr; grid-template-rows: 1fr 1fr; }
.pcell { display: flex; align-items: center; justify-content: center; border: 1px solid #a5a5a3; }
.pcell:nth-child(odd) { border-right-color: #4fcb96; }
.pcell:nth-child(even) { border-left: 0; }
.pcell:nth-child(-n+2) { border-bottom-color: #4fcb96; }
.pcell:nth-child(n+3) { border-top: 0; }
.hint { margin: 10px 0 0; line-height: 18px; }
.dlg-foot { position: relative; height: 41px; display: flex; justify-content: flex-end; gap: 7px; padding-top: 9px; }
.dlg-foot button { width: 63px; height: 25px; background: #dfdfdd; border: 1px solid #d3d3d1; }
.dlg-foot .ok { background: #e3eef8; border-color: #9fcbee; }
.mark { position: absolute; right: 68px; top: 1px; width: 61px; height: 36px; border: 3px solid #e33a40; }
.pointer { position: absolute; right: 89px; top: 13px; opacity: .8; }
```
